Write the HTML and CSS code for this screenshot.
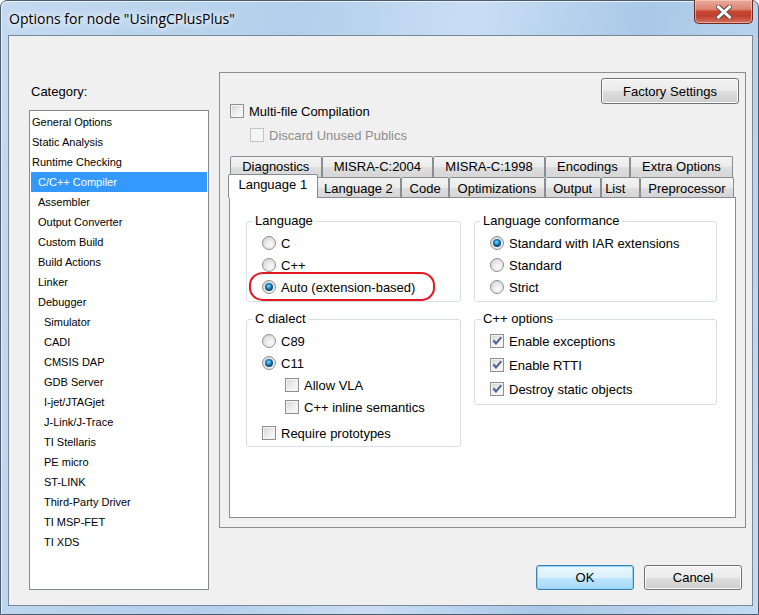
FILE: index.html
```html
<!DOCTYPE html>
<html lang="en">
  <head>
    <meta charset="UTF-8" />
    <title>Options for node "UsingCPlusPlus"</title>
    <link rel="stylesheet" href="styles.css">
  </head>
  <body>
    <div class="window">
      <div class="titlebar">
        <span class="titlebar_text">Options for node "UsingCPlusPlus"</span>
        <button class="close_btn" aria-label="Close">
          <svg width="16" height="14" viewBox="0 0 16 14">
            <path d="M2.5 2 L13.5 12 M13.5 2 L2.5 12" stroke="#5a4a48" stroke-width="5" stroke-linecap="square" fill="none" />
            <path d="M2.5 2 L13.5 12 M13.5 2 L2.5 12" stroke="#ffffff" stroke-width="3" stroke-linecap="square" fill="none" />
          </svg>
        </button>
      </div>

      <div class="client">
        <aside class="category">
          <p class="category_label">Category:</p>
          <ul class="category_list">
            <li>General Options</li>
            <li>Static Analysis</li>
            <li>Runtime Checking</li>
            <li class="lvl1 selected">C/C++ Compiler</li>
            <li class="lvl1">Assembler</li>
            <li class="lvl1">Output Converter</li>
            <li class="lvl1">Custom Build</li>
            <li class="lvl1">Build Actions</li>
            <li class="lvl1">Linker</li>
            <li class="lvl1">Debugger</li>
            <li class="lvl2">Simulator</li>
            <li class="lvl2">CADI</li>
            <li class="lvl2">CMSIS DAP</li>
            <li class="lvl2">GDB Server</li>
            <li class="lvl2">I-jet/JTAGjet</li>
            <li class="lvl2">J-Link/J-Trace</li>
            <li class="lvl2">TI Stellaris</li>
            <li class="lvl2">PE micro</li>
            <li class="lvl2">ST-LINK</li>
            <li class="lvl2">Third-Party Driver</li>
            <li class="lvl2">TI MSP-FET</li>
            <li class="lvl2">TI XDS</li>
          </ul>
        </aside>

        <main class="options">
          <div class="panel">
            <div class="panel_top">
              <button class="btn btn_factory">Factory Settings</button>
            </div>
            <div class="check check_top"><span class="box"></span>Multi-file Compilation</div>
            <div class="check check_sub disabled"><span class="box"></span>Discard Unused Publics</div>

            <div class="tabs">
              <div class="tab_row tab_row_back">
                <span class="tab">Diagnostics</span>
                <span class="tab">MISRA-C:2004</span>
                <span class="tab">MISRA-C:1998</span>
                <span class="tab">Encodings</span>
                <span class="tab">Extra Options</span>
              </div>
              <div class="tab_row tab_row_front">
                <span class="tab active">Language 1</span>
                <span class="tab">Language 2</span>
                <span class="tab">Code</span>
                <span class="tab">Optimizations</span>
                <span class="tab">Output</span>
                <span class="tab tab_short">List</span>
                <span class="tab">Preprocessor</span>
              </div>

              <div class="tab_page">
                <fieldset class="group">
                  <legend>Language</legend>
                  <div class="opt"><span class="radio"></span>C</div>
                  <div class="opt"><span class="radio"></span>C++</div>
                  <div class="opt opt_marked"><span class="radio checked"></span>Auto (extension-based)<span class="marker"></span></div>
                </fieldset>

                <fieldset class="group">
                  <legend>Language conformance</legend>
                  <div class="opt"><span class="radio checked"></span>Standard with IAR extensions</div>
                  <div class="opt"><span class="radio"></span>Standard</div>
                  <div class="opt"><span class="radio"></span>Strict</div>
                </fieldset>

                <fieldset class="group group_dialect">
                  <legend>C dialect</legend>
                  <div class="opt"><span class="radio"></span>C89</div>
                  <div class="opt"><span class="radio checked"></span>C11</div>
                  <div class="opt opt_nested"><span class="box"></span>Allow VLA</div>
                  <div class="opt opt_nested"><span class="box"></span>C++ inline semantics</div>
                  <div class="opt opt_spaced"><span class="box"></span>Require prototypes</div>
                </fieldset>

                <fieldset class="group group_checks">
                  <legend>C++ options</legend>
                  <div class="opt"><span class="box checked"></span>Enable exceptions</div>
                  <div class="opt"><span class="box checked"></span>Enable RTTI</div>
                  <div class="opt"><span class="box checked"></span>Destroy static objects</div>
                </fieldset>
              </div>
            </div>
          </div>

          <div class="dialog_buttons">
            <button class="btn btn_default">OK</button>
            <button class="btn">Cancel</button>
          </div>
        </main>
      </div>
    </div>
  </body>
</html>
```

FILE: styles.css
```css
/* variables */
:root {
  --dialogBg: #f0f0f0;
  --tabBorder: #898c95;
  --groupBorder: #d5dfe5;
  --uiFont: "Liberation Sans", Arial, sans-serif;
}

/* base */
*,
::before,
::after {
  box-sizing: border-box;
  margin: 0;
  padding: 0;
}
body {
  width: 759px;
  height: 615px;
  overflow: hidden;
  font-family: var(--uiFont);
  font-size: 13px;
  color: #000;
  background: #fff;
}
button {
  font-family: var(--uiFont);
  font-size: 13px;
  color: #000;
}

/* window frame */
.window {
  width: 759px;
  height: 615px;
  border: 1px solid #4d5d6e;
  border-radius: 7px 7px 0 0;
  background: linear-gradient(
    100deg,
    #c3daf1 0%,
    #b3cfeb 35%,
    #c9def4 55%,
    #a9c8e8 75%,
    #c4dbf2 100%
  );
  box-shadow: inset 1px 1px 0 #e6f0fa;
}
.titlebar {
  display: flex;
  justify-content: space-between;
  align-items: flex-start;
  height: 34px;
}
.titlebar_text {
  margin: 8px 0 0 8px;
  font-family: "Open Sans", "Noto Sans", sans-serif;
  font-size: 14px;
  line-height: 20px;
  text-shadow: 0 0 6px #fff, 0 0 10px #fff;
}
.close_btn {
  display: flex;
  justify-content: center;
  align-items: center;
  width: 59px;
  height: 24px;
  margin: -1px 5px 0 0;
  border: 1px solid #6e2a22;
  border-top: none;
  border-radius: 0 0 5px 5px;
  background: linear-gradient(
    #e9ab9c 0%,
    #dc8571 40%,
    #c6462f 50%,
    #c04030 70%,
    #d4735f 100%
  );
  box-shadow: inset 0 0 0 1px rgba(255, 220, 210, 0.5);
}

/* client area */
.client {
  display: flex;
  width: 745px;
  height: 571px;
  margin-left: 7px;
  border: 1px solid #7b8794;
  background-color: var(--dialogBg);
}

/* category section */
.category {
  width: 210px;
  flex-shrink: 0;
  padding-left: 20px;
}
.category_label {
  margin-top: 48px;
  padding-left: 2px;
  line-height: 16px;
}
.category_list {
  list-style: none;
  width: 180px;
  height: 480px;
  margin-top: 10px;
  padding: 1px 1px 0 0;
  border: 1px solid #828790;
  background: #fff;
  font-size: 11px;
}
.category_list li {
  height: 20px;
  line-height: 20px;
  padding-left: 2px;
  white-space: nowrap;
}
.category_list .lvl1 {
  padding-left: 8px;
}
.category_list .lvl2 {
  padding-left: 14px;
}
.category_list .selected {
  margin-left: 1px;
  padding-left: 7px;
  background-color: #3399ff;
  color: #fff;
}

/* options section */
.options {
  width: 533px;
}
.panel {
  width: 527px;
  height: 456px;
  margin-top: 36px;
  border: 1px solid #8d8d8d;
}
.panel_top {
  display: flex;
  justify-content: flex-end;
  padding: 5px 6px 0 0;
}
.btn {
  height: 26px;
  border: 1px solid #707070;
  border-radius: 3px;
  background: linear-gradient(#f2f2f2 0%, #ebebeb 50%, #dddddd 51%, #cfcfcf 100%);
  box-shadow: inset 0 0 0 1px #fcfcfc;
}
.btn_factory {
  width: 138px;
}
.btn_default {
  border-color: #3c7fb1;
  background: linear-gradient(#eaf6fd 0%, #d9f0fc 50%, #bee6fd 51%, #a7d9f5 100%);
  box-shadow: inset 0 0 0 1px #8fd4f7;
}

/* checkboxes and radios */
.check,
.opt {
  display: flex;
  align-items: center;
  white-space: nowrap;
}
.check {
  height: 16px;
}
.check_top {
  margin: -1px 0 0 10px;
}
.check_sub {
  margin: 8px 0 0 30px;
}
.disabled {
  color: #8d8d8d;
}
.box {
  display: inline-block;
  flex-shrink: 0;
  width: 14px;
  height: 14px;
  margin-right: 5px;
  border: 1px solid #8e8f8f;
  background: linear-gradient(135deg, #d4d4d4 0%, #f0f0f0 60%, #fbfbfb 100%);
  box-shadow: inset 0 0 0 1px #f4f4f4;
}
.disabled .box {
  border-color: #c4c4c4;
  background: #f4f4f4;
}
.box.checked {
  background:
    url("data:image/svg+xml,%3Csvg xmlns='http://www.w3.org/2000/svg' width='12' height='12' viewBox='0 0 12 12'%3E%3Cpolygon points='1.5,6 3.5,4.8 5,7 9.5,1.5 11,2.8 5,10' fill='%234a5f97'/%3E%3C/svg%3E") center / 12px 12px no-repeat,
    linear-gradient(135deg, #d4d4d4 0%, #f0f0f0 60%, #fbfbfb 100%);
}
.radio {
  position: relative;
  flex-shrink: 0;
  width: 14px;
  height: 14px;
  margin-right: 5px;
  border: 1px solid #8f8f8f;
  border-radius: 50%;
  background: radial-gradient(circle at 60% 65%, #fbfbfb 0%, #e6e6e6 50%, #c9c9c9 100%);
}
.radio.checked::after {
  content: "";
  position: absolute;
  top: 2px;
  left: 2px;
  width: 8px;
  height: 8px;
  border-radius: 50%;
  background: radial-gradient(circle at 45% 40%, #8fdcff 0%, #1f86c2 35%, #0e3f66 70%, #0a2a45 100%);
}

/* tabs */
.tabs {
  margin: 13px 9px 0 9px;
}
.tab_row {
  display: flex;
  align-items: flex-start;
}
.tab_row_back {
  margin: 0 3px 0 1px;
}
.tab_row_front {
  margin: 0 2px 0 1px;
}
.tab {
  flex: 1 0 auto;
  height: 21px;
  padding: 0 6px;
  line-height: 20px;
  text-align: center;
  white-space: nowrap;
  border: 1px solid var(--tabBorder);
  border-bottom: none;
  border-radius: 2px 2px 0 0;
  background: linear-gradient(#f3f3f3 0%, #ebebeb 50%, #dedede 51%, #d6d6d6 100%);
}
.tab_row_front .tab {
  height: 20px;
  line-height: 19px;
  padding-top: 1px;
}
.tab_row_front .tab_short {
  padding: 1px 12px 0 2px;
}
.tab_row_front .tab.active {
  position: relative;
  z-index: 2;
  height: 24px;
  margin: -3px -2px -1px -2px;
  padding: 0 8px;
  line-height: 20px;
  background: #fff;
}
.tab_page {
  display: grid;
  grid-template-columns: 215px 243px;
  column-gap: 13px;
  row-gap: 9px;
  align-items: start;
  align-content: start;
  height: 321px;
  padding: 15px 0 0 16px;
  border: 1px solid var(--tabBorder);
  background: #fff;
}

/* group boxes */
.group {
  min-width: 0;
  padding: 3px 0 3px 15px;
  border: 1px solid var(--groupBorder);
  border-radius: 3px;
}
.group legend {
  margin-left: -9px;
  padding: 0 2px;
  line-height: 16px;
}
.group .opt {
  height: 22px;
}
.group_dialect {
  padding-bottom: 2px;
}
.group_checks {
  padding: 2px 0 3px 15px;
}
.group_checks .opt {
  height: 24px;
}
.opt_nested {
  margin-left: 23px;
}
.group .opt_spaced {
  margin-top: 4px;
}

/* red marker round the picked language */
.opt_marked {
  position: relative;
}
.marker {
  position: absolute;
  top: -4px;
  left: -13px;
  width: 186px;
  height: 29px;
  border: 2px solid #e3171f;
  border-radius: 14px / 13px;
}

/* dialog buttons */
.dialog_buttons {
  display: flex;
  justify-content: flex-end;
  gap: 10px;
  margin-top: 37px;
  padding-right: 10px;
}
.dialog_buttons .btn {
  width: 98px;
  height: 25px;
}
```
